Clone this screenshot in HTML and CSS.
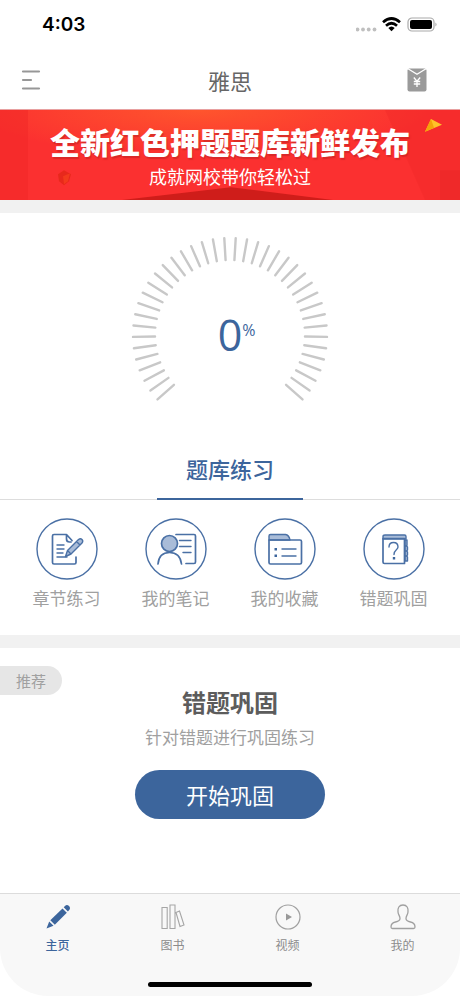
FILE: index.html
```html
<!DOCTYPE html>
<html lang="zh-CN">
<head>
<meta charset="utf-8">
<meta name="viewport" content="width=device-width, initial-scale=1">
<title>雅思</title>
<link rel="stylesheet" href="styles.css">
</head>
<body>
<div class="app">
  <div class="status">
    <span class="time">4:03</span>
    <svg class="status-icons" width="84" height="18" viewBox="0 0 84 18" aria-hidden="true">
      <g fill="#bfbfbf"><circle cx="1.500" cy="13.500" r="1.900"/><circle cx="7" cy="13.500" r="1.900"/><circle cx="12.700" cy="13.500" r="1.900"/><circle cx="18.500" cy="13.500" r="1.900"/></g>
      <g fill="none" stroke="#000" stroke-width="2.700"><path d="M27 6.200Q35.500-1.200 44 6.200"/><path d="M30 9.700Q35.500 4.800 41 9.700"/></g>
      <path d="M32.300 12Q35.500 9 38.700 12L35.500 15.300Z"/>
      <rect x="52" y="2" width="26" height="13" rx="4" fill="none" stroke="#aaa" stroke-width="1.200"/>
      <rect x="54" y="4" width="22" height="9" rx="2"/>
      <path d="M79.500 6.500Q81.500 8.500 79.500 10.500Z" fill="#999"/>
    </svg>
  </div>
  <header class="nav">
    <button class="icon-btn" aria-label="菜单">
      <svg width="20" height="20" viewBox="0 0 20 20"><path d="M2 1.500H18M2 10H10M2 18.500H18" stroke="#979797" stroke-width="2.200" stroke-linecap="round"/></svg>
    </button>
    <h1>雅思</h1>
    <button class="icon-btn" aria-label="红包">
      <svg width="20" height="24" viewBox="0 0 20 24"><rect x=".5" y=".5" width="19" height="23" rx="2" fill="#9a9a9a"/><path d="M1 .8L10 6.200 19 .8" fill="none" stroke="#fff" stroke-width="1.300"/><path d="M6.800 9.500L10 13.200 13.200 9.500M10 13.200V19M6.800 13.500H13.200M6.800 16H13.200" fill="none" stroke="#fff" stroke-width="1.300"/></svg>
    </button>
  </header>

  <a class="banner" href="#banner">
    <svg class="banner-art" viewBox="0 0 460 91" preserveAspectRatio="none" aria-hidden="true">
      <defs>
        <radialGradient id="glow" cx=".43" cy="0" r=".5"><stop offset="0" stop-color="#ff552d"/><stop offset="1" stop-color="#fb3030"/></radialGradient>
      </defs>
      <rect width="460" height="91" fill="url(#glow)"/>
      <path d="M0 0H28V91H0Z" fill="#ef2525" opacity=".45"/>
      <path d="M375 0H460V91H425L385 0Z" fill="#ef2929" opacity=".4"/>
      <path d="M440 61H460V91H440Z" fill="#df2424" opacity=".3"/>
      <path d="M122 91L231 78 333 91Z" fill="#cf1d1a"/>
      <path d="M58 65L64 61 71 65 69 72 64 76 59 72Z" fill="#e8281c"/>
      <path d="M63 67L70 64 68 72 64 75Z" fill="#f33a1d"/>
      <path d="M431 9L442 15 425 22Z" fill="#ffc328"/><path d="M431 9L434 18 425 22Z" fill="#f4a30a"/>
    </svg>
    <strong>全新红色押题题库新鲜发布</strong>
    <span>成就网校带你轻松过</span>
  </a>

  <main>
    <section class="practice">
      <div class="gauge">
        <svg id="dial" width="200" height="200" viewBox="-100 -100 200 200" aria-hidden="true"></svg>
        <p class="score">0<sup>%</sup></p>
      </div>
      <div class="heading"><h2>题库练习</h2></div>
      <nav class="tiles">
        <a href="#chapter">
          <svg viewBox="0 0 62 62" class="tile-icon">
            <circle cx="31" cy="31" r="30"/>
            <path class="thick" d="M40 39V44.500Q40 46 38.500 46H18Q16.500 46 16.500 44.500V18Q16.500 16.500 18 16.500H30.500L36 22.500M30.500 16.500V21Q30.500 24 33.500 24H35"/>
            <path d="M21 27H28M21 31H28M21 35H27M21 39H31"/>
            <path class="tint" d="M29.500 38.500L31.500 32.500 42.500 21.500Q44.500 20 46 21.500T46 25L35 36ZM40.500 23.500L44 27M31.500 32.500L35 36"/>
          </svg><span>章节练习</span></a>
        <a href="#notes">
          <svg viewBox="0 0 62 62" class="tile-icon">
            <circle cx="31" cy="31" r="30"/>
            <circle class="tint thick" cx="24.500" cy="25.500" r="8"/>
            <path class="thick" d="M13 46Q14 34.500 24.500 34.500T36.500 46M31 16.500H49Q50.500 16.500 50.500 18V44Q50.500 45.500 49 45.500H41"/>
            <path d="M34.500 22.500H46M34.500 28.500H46M38 34.500H46"/>
          </svg><span>我的笔记</span></a>
        <a href="#favorites">
          <svg viewBox="0 0 62 62" class="tile-icon">
            <circle cx="31" cy="31" r="30"/>
            <path class="tint" d="M15 22V18Q15 16.500 16.500 16.500H31.500Q35 17 36 22Z"/>
            <path class="thick" d="M15 22H46Q47.500 22 47.500 23.500V44.500Q47.500 46 46 46H16.500Q15 46 15 44.500Z"/>
            <path d="M28 31H42M28 38H42"/><path class="dot" d="M20.500 30H23V32.500H20.500ZM20.500 36.500H23V39H20.500Z"/>
          </svg><span>我的收藏</span></a>
        <a href="#mistakes">
          <svg viewBox="0 0 62 62" class="tile-icon">
            <circle cx="31" cy="31" r="30"/>
            <path class="tint" d="M20 21V18.500Q20 17 22 17H41.500Q43 17 43 18.500V21Z"/>
            <path class="tint" d="M42 22H44V27L43.500 28 44.500 29V32L43.500 33 44.500 34V37L43.500 38 44.500 39V43H42ZM42 28H44M42 33H44M42 38H44"/>
            <path class="thick" d="M20 20.500H41.500V45.500H21.500Q20 45.500 20 44Z"/>
            <path d="M26 29Q26 24.500 30.500 24.500T35 29C35 32 31 31.500 31 36.500"/><path class="dot" d="M29.800 39H32.200V41.500H29.800Z"/>
          </svg><span>错题巩固</span></a>
      </nav>
    </section>

    <section class="recommend">
      <span class="tag">推荐</span>
      <h2>错题巩固</h2>
      <p>针对错题进行巩固练习</p>
      <button class="start">开始巩固</button>
    </section>
  </main>

  <footer class="tabbar">
    <nav class="tabs">
      <a class="active" href="#home" aria-current="page">
        <svg viewBox="0 0 26 26"><g fill="currentColor"><path d="M1.500 24.500L4.200 17.500 8.500 21.800Z"/><path d="M5.300 16.200L17.500 4.500 21.800 8.800 9.800 20.700Z"/><path d="M18.700 3.300L20 2Q22-.1 24 2.100T24 6.300L22.900 7.600Z"/></g></svg>
        主页</a>
      <a href="#books">
        <svg viewBox="0 0 26 26"><path d="M2 3.500H7.200V24.500H2ZM10 1H15V24.500H10ZM16 8.500L19.500 7 24 21 20 22.500Z" fill="none" stroke="#a6a6a6" stroke-width="1.100"/></svg>
        图书</a>
      <a href="#videos">
        <svg viewBox="0 0 26 26"><circle cx="13" cy="13" r="12" fill="none" stroke="#a0a0a0" stroke-width="1.200"/><path d="M11 9.500L17 13 11 16.500Z" fill="#999"/></svg>
        视频</a>
      <a href="#me">
        <svg viewBox="0 0 26 26"><path d="M13 1C9 1 7.500 4 8 8C8.300 11 10 12 10 14.500Q10 17 5.500 18Q1 19 1 23Q1 24.500 2.500 24.500H23.500Q25 24.500 25 23Q25 19 20.500 18Q16 17 16 14.500C16 12 17.700 11 18 8C18.500 4 17 1 13 1Z" fill="none" stroke="#a0a0a0" stroke-width="1.300"/></svg>
        我的</a>
    </nav>
    <div class="home-indicator"></div>
  </footer>
</div>
<script src="dial.js"></script>
</body>
</html>
```
FILE: styles.css
```css
* { box-sizing: border-box; }
body {
  margin: 0;
  background: #fff;
  color: #a0a0a0;
  font-family: "Noto Sans CJK SC", sans-serif;
  font-weight: 400;
}
h1, h2, p { margin: 0; font-weight: inherit; }
a { color: inherit; text-decoration: none; }
button { border: 0; padding: 0; background: none; font: inherit; color: inherit; }
svg { display: block; }

.app { display: flex; flex-direction: column; min-height: 100vh; }

.status {
  display: flex;
  justify-content: space-between;
  align-items: center;
  height: 50px;
  padding: 0 20px 0 42px;
}
.time { color: #000; font: 600 19px/24px Inter, sans-serif; }

.nav {
  display: grid;
  grid-template-columns: 1fr auto 1fr;
  align-items: center;
  height: 60px;
  padding: 0 32px 0 32px;
  padding: 0 20px;
  border-bottom: 1px solid #e8a0a0;
}
.nav h1 { font-size: 22px; line-height: 32px; color: #666; }
.icon-btn { display: flex; width: 22px; justify-content: center; }
.icon-btn:last-child { justify-self: end; margin-right: 12px; }

.banner {
  position: relative;
  display: flex;
  flex-direction: column;
  align-items: center;
  height: 90px;
  padding-top: 10px;
  color: #fff;
  background: #fb3030;
}
.banner-art { position: absolute; inset: 0; width: 100%; height: 100%; }
.banner strong {
  position: relative;
  font-size: 30px;
  line-height: 42px;
  font-weight: 900;
  white-space: nowrap;
  text-shadow: 1px 2px 1px #b9202080;
}
.banner span { position: relative; font-size: 18px; line-height: 28px; }

main { flex: 1; }
.practice { border: solid #f1f1f1; border-width: 13px 0; }

.gauge { display: grid; justify-items: center; align-items: center; padding-top: 22px; }
.gauge > * { grid-area: 1 / 1; }
.score {
  position: relative;
  color: #3c659c;
  font: 400 43px/50px "Open Sans", "Noto Sans", sans-serif;
}
.score sup { position: absolute; left: 100%; top: 8px; font-size: 16px; line-height: 24px; }

.heading {
  display: flex;
  justify-content: center;
  margin-top: 4px;
  border-bottom: 1px solid #ddd;
}
.heading h2 {
  width: 146px;
  padding: 13px 0 14px;
  margin-bottom: -1px;
  border-bottom: 2px solid #3c659c;
  color: #3c659c;
  font-size: 22px;
  line-height: 32px;
  font-weight: 500;
  text-align: center;
}

.tiles { display: grid; grid-template-columns: repeat(4, 1fr); padding: 18px 12px 24px; }
.tiles a { display: flex; flex-direction: column; align-items: center; gap: 5px; font-size: 17px; line-height: 26px; }
.tile-icon {
  width: 62px;
  height: 62px;
  fill: none;
  stroke: #4a70a5;
  stroke-width: 1.4;
  stroke-linejoin: round;
  stroke-linecap: round;
}
.tile-icon .thick { stroke-width: 1.7; }
.tile-icon .tint { fill: #a9bcd8; }
.tile-icon .dot { fill: #3c659c; stroke: none; }

.recommend {
  position: relative;
  display: flex;
  flex-direction: column;
  align-items: center;
  padding: 36px 0;
}
.tag {
  position: absolute;
  left: 0;
  top: 18px;
  width: 62px;
  border-radius: 0 15px 15px 0;
  background: #e6e6e6;
  font-size: 15px;
  line-height: 29px;
  text-align: center;
}
.recommend h2 { color: #5c5c5c; font-size: 24px; line-height: 36px; font-weight: 700; }
.recommend p { font-size: 17px; line-height: 26px; margin-top: 4px; }
.start {
  width: 190px;
  height: 49px;
  margin-top: 20px;
  padding-bottom: 2px;
  border-radius: 25px;
  background: #3c659c;
  color: #fff;
  font-size: 22px;
}

.tabbar {
  border-top: 1px solid #dcdcdc;
  border-radius: 0 0 48px 48px;
  background: #f8f8f8;
  padding-bottom: 9px;
}
.tabs { display: grid; grid-template-columns: repeat(4, 1fr); padding-top: 10px; }
.tabs a {
  display: flex;
  flex-direction: column;
  align-items: center;
  gap: 6px;
  font-size: 12px;
  line-height: 18px;
  color: #8c8c8c;
}
.tabs .active { color: #3c659c; font-weight: 500; }
.tabs svg { width: 26px; height: 26px; }
.home-indicator { width: 164px; height: 5px; margin: 28px auto 0; border-radius: 3px; background: #000; }
```
FILE: dial.js
```js
const dial = document.getElementById("dial");
const TICKS = 40;
const STEP = 6.75;
for (let i = 0; i < TICKS; i++) {
  const tick = document.createElementNS("http://www.w3.org/2000/svg", "line");
  tick.setAttribute("y1", "-75");
  tick.setAttribute("y2", "-97");
  tick.setAttribute("stroke", "#c8c8c8");
  tick.setAttribute("stroke-width", "2.400");
  tick.setAttribute("stroke-linecap", "round");
  tick.setAttribute("transform", `rotate(${(i - (TICKS - 1) / 2) * STEP})`);
  dial.append(tick);
}
```
